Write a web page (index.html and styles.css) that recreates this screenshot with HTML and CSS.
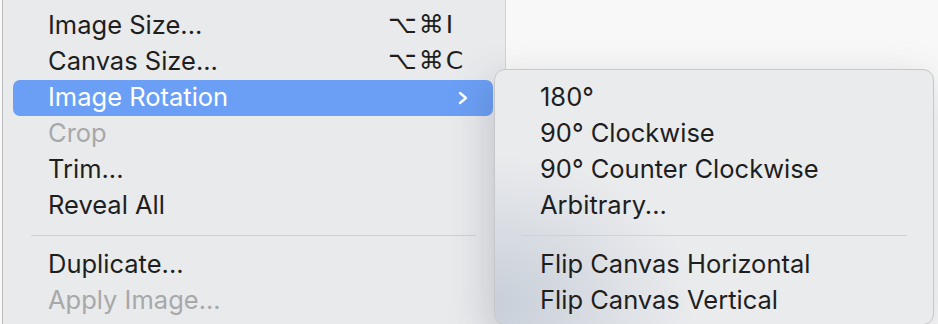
FILE: index.html
```html
<!DOCTYPE html>
<html lang="en">
<head>
    <meta charset="UTF-8">
    <meta name="viewport" content="width=device-width, initial-scale=1.0">
    <title>Image menu</title>

    <link rel="stylesheet" href="styles.css">
</head>

<body>

  <div class="desk">

    <!-- menu principal -->
    <div class="menu">
      <div class="item"><span class="label">Image Size...</span><span class="keys">⌥⌘I</span></div>
      <div class="item"><span class="label">Canvas Size...</span><span class="keys">⌥⌘C</span></div>
      <div class="item active">
        <span class="label">Image Rotation</span>
        <svg class="chev" width="12" height="14" viewBox="0 0 12 14"><path d="M3 2 L9 7 L3 12" fill="none" stroke="#fff" stroke-width="2.4" stroke-linecap="round" stroke-linejoin="round"/></svg>
      </div>
      <div class="item off"><span class="label">Crop</span></div>
      <div class="item"><span class="label">Trim...</span></div>
      <div class="item"><span class="label">Reveal All</span></div>
      <div class="sep"></div>
      <div class="item"><span class="label">Duplicate...</span></div>
      <div class="item off"><span class="label">Apply Image...</span></div>
    </div>

    <!-- submenu -->
    <div class="submenu">
      <div class="item"><span class="label">180°</span></div>
      <div class="item"><span class="label">90° Clockwise</span></div>
      <div class="item"><span class="label">90° Counter Clockwise</span></div>
      <div class="item"><span class="label">Arbitrary...</span></div>
      <div class="sep"></div>
      <div class="item"><span class="label">Flip Canvas Horizontal</span></div>
      <div class="item"><span class="label">Flip Canvas Vertical</span></div>
    </div>

  </div>

</body>
</html>
```

FILE: styles.css
```css
body {
  margin: 0;
  background: #f8f8f8;
  font-family: Inter, "Noto Sans", "DejaVu Sans", sans-serif;
  font-size: 25.5px;
  color: #1e1e1e;
}

.desk {
  position: relative;
  width: 938px;
  height: 324px;
  overflow: hidden;
}

/* menu principal */

.menu {
  margin-left: 2px;
  width: 480px;
  height: 324px;
  padding: 8px 12px 0 10px;
  background: #e9eaec;
  border-left: 1px solid #b9babc;
  border-right: 1px solid #d2d3d5;
}

.item {
  display: flex;
  align-items: center;
  box-sizing: border-box;
  height: 36px;
  padding-left: 35px;
  padding-bottom: 3px;
  border-radius: 7px;
  white-space: nowrap;
}

.item .label {
  flex: 1;
}

.keys {
  width: 105px;
  letter-spacing: 2px;
  font-family: "DejaVu Sans", Inter, sans-serif;
  font-size: 25px;
}

.active {
  background: #6b9ff5;
  color: #fff;
}

.chev {
  margin-right: 24px;
  margin-top: 3px;
}

.off {
  color: #a7a8aa;
}

.sep {
  height: 1px;
  margin: 11px 17px 11px 18px;
  background: #d0d1d3;
}

/* submenu */

.submenu {
  position: absolute;
  left: 494px;
  top: 69px;
  width: 440px;
  height: 256px;
  padding-top: 10px;
  box-sizing: border-box;
  border: 1px solid #c6c7c9;
  border-radius: 11px;
  background:
    radial-gradient(ellipse 200px 150px at 0% 92%, rgba(172, 184, 200, 0.55), rgba(172, 184, 200, 0) 100%),
    #eaebed;
  box-shadow: -6px 12px 40px rgba(60, 70, 90, 0.22);
}

.submenu .item {
  padding-left: 45px;
}

.submenu .sep {
  margin: 11px 26px 11px 27px;
}
```
